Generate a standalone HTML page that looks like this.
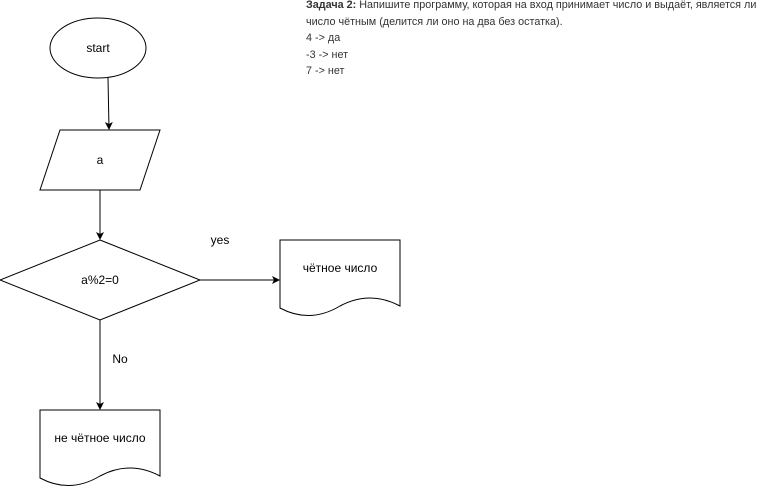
<!DOCTYPE html>
<html><head><meta charset="utf-8"><style>
body{margin:0;background:#fff;width:761px;height:491px;overflow:hidden;position:relative;font-family:"Liberation Sans",Arial,sans-serif}
.t{position:absolute;left:306px;font-size:10.8px;color:#333;white-space:nowrap}
</style></head><body>
<svg width="761" height="491" style="position:absolute;left:0;top:0" font-family="Liberation Sans, Arial, sans-serif" font-size="12">
<defs><marker id="a" markerWidth="8" markerHeight="8" refX="7" refY="4" orient="auto" markerUnits="userSpaceOnUse"><path d="M0,0 L8,4 L0,8 L2,4Z" fill="#000"/></marker></defs>
<g fill="#fff" stroke="#000" stroke-width="1">
<ellipse cx="98" cy="48" rx="48" ry="30"/>
<path d="M60,130 H160 L140,190 H40 Z"/>
<path d="M100,240 L200,280 L100,320 L0,280 Z"/>
<path d="M280,240 H400 V306 Q370,290 340,306 Q310,324 280,308 Z"/>
<path d="M40,410 H160 V476 Q130,460 100,476 Q70,494 40,478 Z"/>
</g>
<g stroke="#000" fill="none">
<line x1="108" y1="78" x2="109" y2="129" marker-end="url(#a)"/>
<line x1="100" y1="190" x2="100" y2="239" marker-end="url(#a)"/>
<line x1="200" y1="280" x2="279" y2="280" marker-end="url(#a)"/>
<line x1="100" y1="320" x2="100" y2="409" marker-end="url(#a)"/>
</g>
<g fill="#000" text-anchor="middle">
<text x="98" y="52">start</text>
<text x="100" y="164">a</text>
<text x="100" y="284">a%2=0</text>
<text x="340" y="272">чётное число</text>
<text x="100" y="442">не чётное число</text>
<text x="220" y="244">yes</text>
<text x="120" y="363">No</text>
</g>
</svg>
<div class="t" style="top:-1px"><b>Задача 2:</b> Напишите программу, которая на вход принимает число и выдаёт, является ли</div>
<div class="t" style="top:16px">число чётным (делится ли оно на два без остатка).</div>
<div class="t" style="top:32px">4 -&gt; да</div>
<div class="t" style="top:49px">-3 -&gt; нет</div>
<div class="t" style="top:65px">7 -&gt; нет</div>
</body></html>
